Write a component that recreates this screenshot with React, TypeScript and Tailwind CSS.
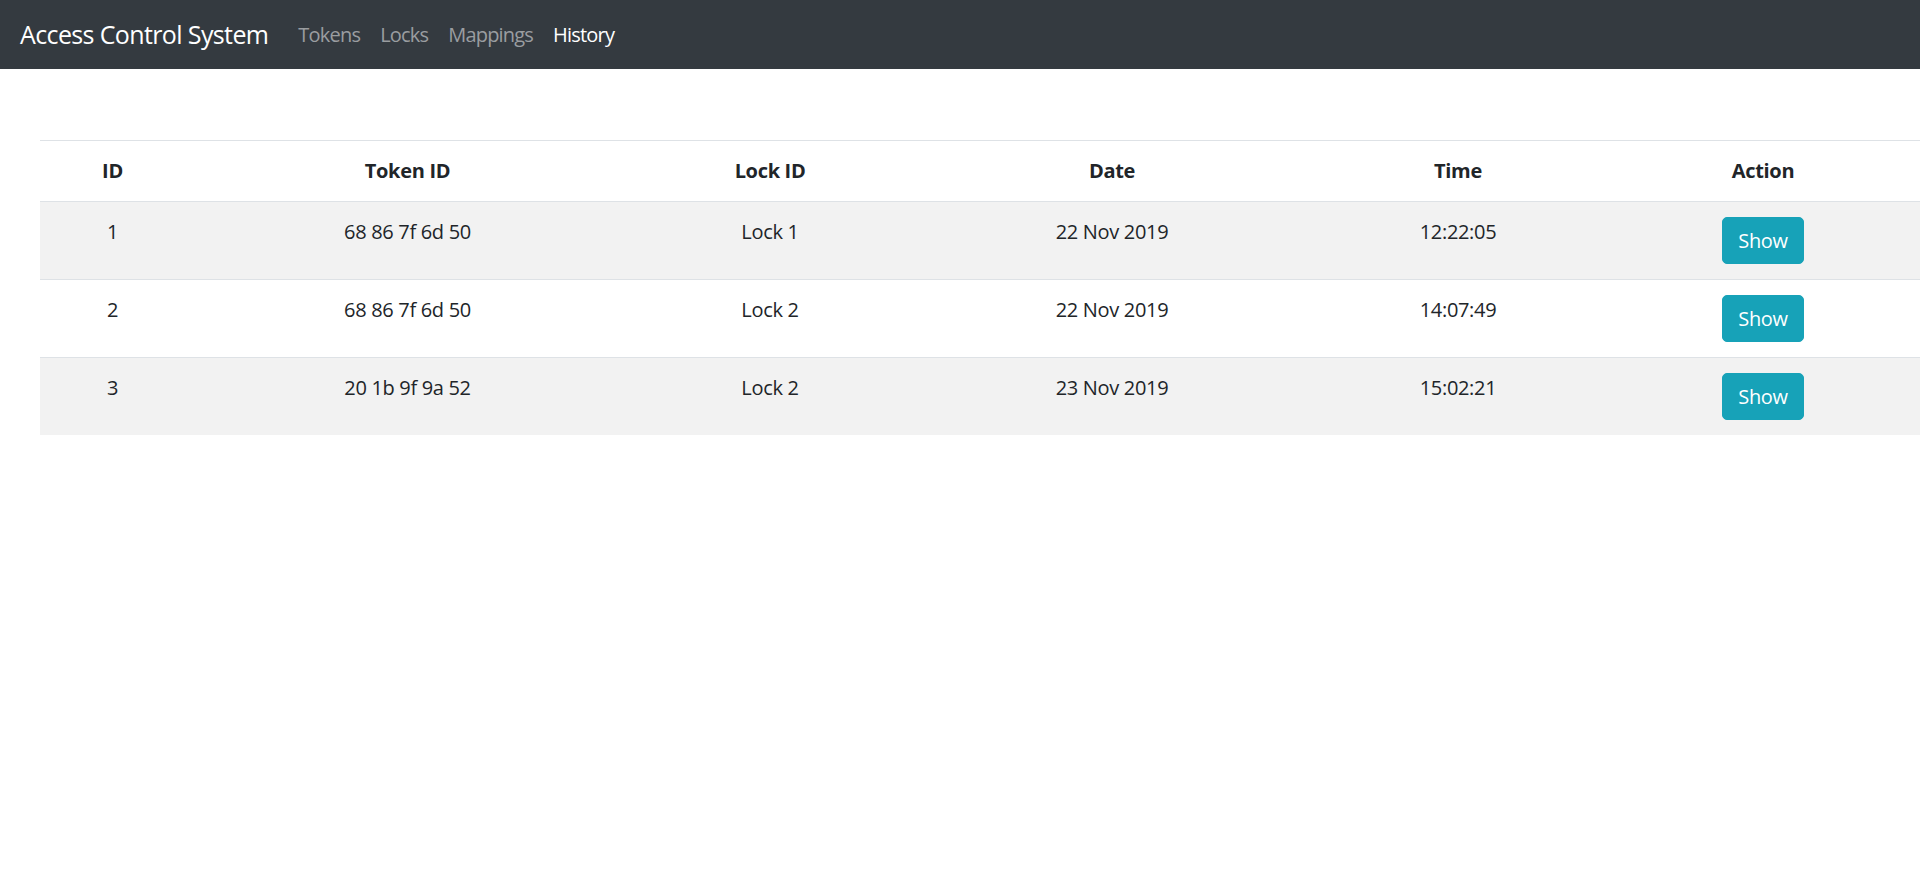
import React from 'react';

interface HistoryEntry {
  id: number;
  tokenId: string;
  lockId: string;
  date: string;
  time: string;
}

const entries: HistoryEntry[] = [
  { id: 1, tokenId: '68 86 7f 6d 50', lockId: 'Lock 1', date: '22 Nov 2019', time: '12:22:05' },
  { id: 2, tokenId: '68 86 7f 6d 50', lockId: 'Lock 2', date: '22 Nov 2019', time: '14:07:49' },
  { id: 3, tokenId: '20 1b 9f 9a 52', lockId: 'Lock 2', date: '23 Nov 2019', time: '15:02:21' },
];

const navLinks = [
  { label: 'Tokens', active: false },
  { label: 'Locks', active: false },
  { label: 'Mappings', active: false },
  { label: 'History', active: true },
];

const Navbar: React.FC = () => (
  <nav className="flex h-[69px] items-center bg-[#343a40] px-5">
    <a href="#" className="mr-5 text-[25px] leading-[37px] tracking-[-0.025em] text-white">
      Access Control System
    </a>
    <ul className="flex">
      {navLinks.map(link => (
        <li key={link.label}>
          <a
            href="#"
            className={`block px-[10px] text-[20px] leading-[30px] tracking-[-0.04em] ${
              link.active ? 'text-white' : 'text-[#9a9da0]'
            }`}
          >
            {link.label}
          </a>
        </li>
      ))}
    </ul>
  </nav>
);

const cell = 'border-t border-[#dee2e6] p-[15px] align-top';

const HistoryTable: React.FC<{ rows: HistoryEntry[] }> = ({ rows }) => (
  <table className="w-[1884px] table-fixed border-collapse text-center text-[20px] leading-[30px] text-[#212529]">
    <colgroup>
      <col className="w-[145px]" />
      <col className="w-[445px]" />
      <col className="w-[280px]" />
      <col className="w-[404px]" />
      <col className="w-[288px]" />
      <col />
    </colgroup>
    <thead>
      <tr>
        {['ID', 'Token ID', 'Lock ID', 'Date', 'Time', 'Action'].map(h => (
          <th key={h} className={`${cell} font-bold`}>
            {h}
          </th>
        ))}
      </tr>
    </thead>
    <tbody>
      {rows.map((row, i) => (
        <tr key={row.id} className={i % 2 === 0 ? 'bg-[#f2f2f2]' : 'bg-white'}>
          <td className={cell}>{row.id}</td>
          <td className={cell}>{row.tokenId}</td>
          <td className={cell}>{row.lockId}</td>
          <td className={cell}>{row.date}</td>
          <td className={cell}>{row.time}</td>
          <td className={cell}>
            <button className="rounded-[5px] border border-[#17a2b8] bg-[#17a2b8] px-[15px] py-[7.5px] text-[20px] leading-[30px] text-white">
              Show
            </button>
          </td>
        </tr>
      ))}
    </tbody>
  </table>
);

export default function App() {
  return (
    <div className="min-h-[881px] overflow-hidden bg-white font-['Open_Sans',sans-serif] tracking-[-0.02em]">
      <Navbar />
      <div className="pl-10 pt-[71px]">
        <HistoryTable rows={entries} />
      </div>
    </div>
  );
}
